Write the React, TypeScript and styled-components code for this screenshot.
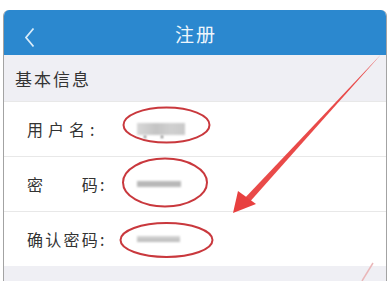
import React from "react";
import styled, { createGlobalStyle } from "styled-components";

const GlobalStyle = createGlobalStyle`
  html, body {
    margin: 0;
    padding: 0;
    background: #ffffff;
  }
  body {
    font-family: "Noto Sans CJK SC", "Noto Sans", sans-serif;
    overflow: hidden;
  }
`;

const Page = styled.div`
  position: relative;
  width: 391px;
  height: 281px;
  padding-top: 10px;
  box-sizing: border-box;
  overflow: hidden;
`;

const Card = styled.div`
  margin-left: 3px;
  width: 384px;
  height: 271px;
  border-left: 1px solid #a3a3a3;
  border-right: 1px solid #a3a3a3;
  border-radius: 6px 6px 0 0;
  box-sizing: border-box;
  display: flex;
  flex-direction: column;
  overflow: hidden;
`;

const Header = styled.div`
  height: 45px;
  flex: none;
  background: #2b88cf;
  display: flex;
  align-items: center;
  justify-content: center;
  position: relative;
`;

const Back = styled.div`
  position: absolute;
  left: 20px;
  top: 17px;
  width: 11px;
  height: 21px;
`;

const Title = styled.div`
  color: #eef6fc;
  font-size: 19px;
  letter-spacing: 2px;
  margin-left: 2px;
  margin-top: 2px;
`;

const Section = styled.div<{ $h: number }>`
  height: ${(p) => p.$h}px;
  flex: none;
  background: #efeff4;
  display: flex;
  align-items: center;
  padding-left: 11px;
  color: #333333;
  font-size: 17px;
  letter-spacing: 2px;
`;

const Row = styled.div`
  height: 55px;
  flex: none;
  background: #ffffff;
  border-top: 1px solid #e8e8e8;
  box-sizing: border-box;
  display: flex;
  align-items: center;
  padding-left: 23px;
`;

const Label = styled.div<{ $spacing: number }>`
  width: 110px;
  flex: none;
  color: #333333;
  font-size: 16px;
  letter-spacing: ${(p) => p.$spacing}px;
  white-space: pre;
`;

const Blur = styled.div<{ $w: number; $h: number; $tone: string }>`
  width: ${(p) => p.$w}px;
  height: ${(p) => p.$h}px;
  background: ${(p) => p.$tone};
  filter: blur(1.2px);
  position: relative;
`;

const Dot = styled.span<{ $x: number }>`
  position: absolute;
  left: ${(p) => p.$x}px;
  bottom: -3px;
  width: 2px;
  height: 2px;
  background: #555;
`;

const Overlay = styled.svg`
  position: absolute;
  left: 0;
  top: 0;
  pointer-events: none;
`;

export default function App() {
  return (
    <>
      <GlobalStyle />
      <Page>
        <Card>
          <Header>
            <Back>
              <svg width="11" height="21" viewBox="0 0 11 21">
                <polyline
                  points="9.5,1.5 2,10.5 9.5,19.5"
                  fill="none"
                  stroke="#d9ecf9"
                  strokeWidth="1.8"
                />
              </svg>
            </Back>
            <Title>注册</Title>
          </Header>
          <Section $h={46}>基本信息</Section>
          <Row>
            <Label $spacing={5}>用户名:</Label>
            <Blur $w={48} $h={12} $tone="linear-gradient(90deg,#d8d8d8,#c4c4c4 40%,#d0d0d0 70%,#c9c9c9)">
              <Dot $x={7} />
              <Dot $x={24} />
            </Blur>
          </Row>
          <Row>
            <Label $spacing={2.25}>{"密　　码:"}</Label>
            <Blur $w={44} $h={6} $tone="#b8b8b8" />
          </Row>
          <Row>
            <Label $spacing={2.25}>确认密码:</Label>
            <Blur $w={43} $h={6} $tone="linear-gradient(180deg,#d6d6d6,#bababa)" />
          </Row>
          <Section $h={20} />
        </Card>
        <Overlay width="391" height="281" viewBox="0 0 391 281">
          <g fill="none" stroke="#c9383d" strokeWidth="2">
            <ellipse cx="166.5" cy="125" rx="43" ry="17.5" />
            <ellipse cx="165" cy="182.5" rx="42" ry="24" />
            <ellipse cx="166.5" cy="240" rx="46" ry="17" />
          </g>
          <polygon
            points="380.5,55 379.5,56 242.5,200.5 247,205"
            fill="#e8403f"
            opacity="0.95"
          />
          <polygon points="233,213 238,191 256,204" fill="#e8403f" />
          <line
            x1="362"
            y1="281"
            x2="373"
            y2="263"
            stroke="#eab7b9"
            strokeWidth="1.5"
          />
        </Overlay>
      </Page>
    </>
  );
}
